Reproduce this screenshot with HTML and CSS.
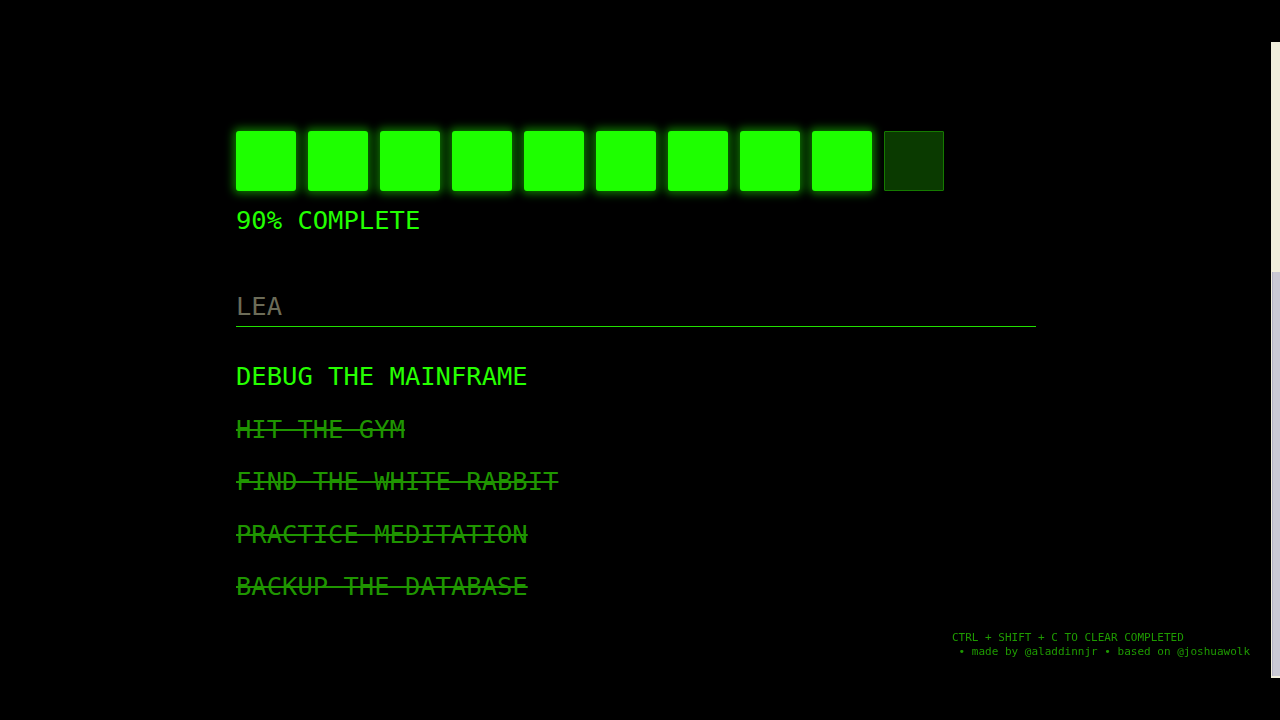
FILE: index.html
```html
<!DOCTYPE html>
<html lang="en">
<head>
<meta charset="utf-8">
<title>Todo</title>
<link rel="stylesheet" href="styles.css">
</head>
<body>
<main class="app">
  <div class="progress">
    <span class="cell on"></span>
    <span class="cell on"></span>
    <span class="cell on"></span>
    <span class="cell on"></span>
    <span class="cell on"></span>
    <span class="cell on"></span>
    <span class="cell on"></span>
    <span class="cell on"></span>
    <span class="cell on"></span>
    <span class="cell off"></span>
  </div>
  <div class="label">90% COMPLETE</div>
  <input class="entry" type="text" value="LEA">
  <ul class="todos">
    <li class="todo">DEBUG THE MAINFRAME</li>
    <li class="todo done">HIT THE GYM</li>
    <li class="todo done">FIND THE WHITE RABBIT</li>
    <li class="todo done">PRACTICE MEDITATION</li>
    <li class="todo done">BACKUP THE DATABASE</li>
  </ul>
</main>
<footer class="credits">CTRL + SHIFT + C TO CLEAR COMPLETED
 • made by @aladdinnjr • based on @joshuawolk</footer>
<div class="scrollbar"><div class="thumb"></div></div>
</body>
</html>
```
FILE: styles.css
```css
html, body {
  margin: 0;
  padding: 0;
  background: #000;
  height: 100%;
  overflow: hidden;
}
body {
  font-family: "DejaVu Sans Mono", "Liberation Mono", monospace;
  color: #22ff00;
}
.app {
  width: 800px;
  padding: 131px 0 0 236px;
}
.progress {
  display: flex;
  gap: 12px;
}
.cell {
  width: 60px;
  height: 60px;
  box-sizing: border-box;
  border-radius: 3px;
}
.cell.on {
  background: #1eff00;
  box-shadow: 0 0 9px 3px rgba(30, 255, 0, 0.45);
}
.cell.off {
  background: #0a3a00;
  border: 1px solid #157a00;
  border-radius: 1px;
}
.label {
  margin-top: 14px;
  font-size: 25.5px;
  line-height: 30px;
  color: #22ff00;
}
.entry {
  display: block;
  margin: 56px 0 0 0;
  width: 800px;
  height: 30px;
  padding: 0 0 5px 0;
  box-sizing: content-box;
  border: none;
  border-bottom: 1px solid #22e000;
  background: transparent;
  font-family: "DejaVu Sans Mono", "Liberation Mono", monospace;
  font-size: 25.5px;
  line-height: 30px;
  color: #6c6c58;
  outline: none;
}
.todos {
  list-style: none;
  margin: 34px 0 0 0;
  padding: 0;
  display: flex;
  flex-direction: column;
  gap: 22.6px;
}
.todo {
  font-size: 25.5px;
  line-height: 30px;
  color: #26ff00;
}
.todo.done {
  color: #1f9500;
  text-decoration: line-through;
  text-decoration-thickness: 2px;
}
.credits {
  position: fixed;
  left: 952px;
  top: 631px;
  font-size: 11px;
  line-height: 14px;
  color: #1e9a00;
  white-space: pre;
}
.scrollbar {
  position: fixed;
  right: 0;
  top: 42px;
  width: 9px;
  height: 636px;
  background: #f0eedc;
}
.thumb {
  position: absolute;
  left: 1px;
  right: 0;
  top: 230px;
  bottom: 2px;
  background: #cac9d4;
  border-left: 1px solid #b4b3c4;
}
```
